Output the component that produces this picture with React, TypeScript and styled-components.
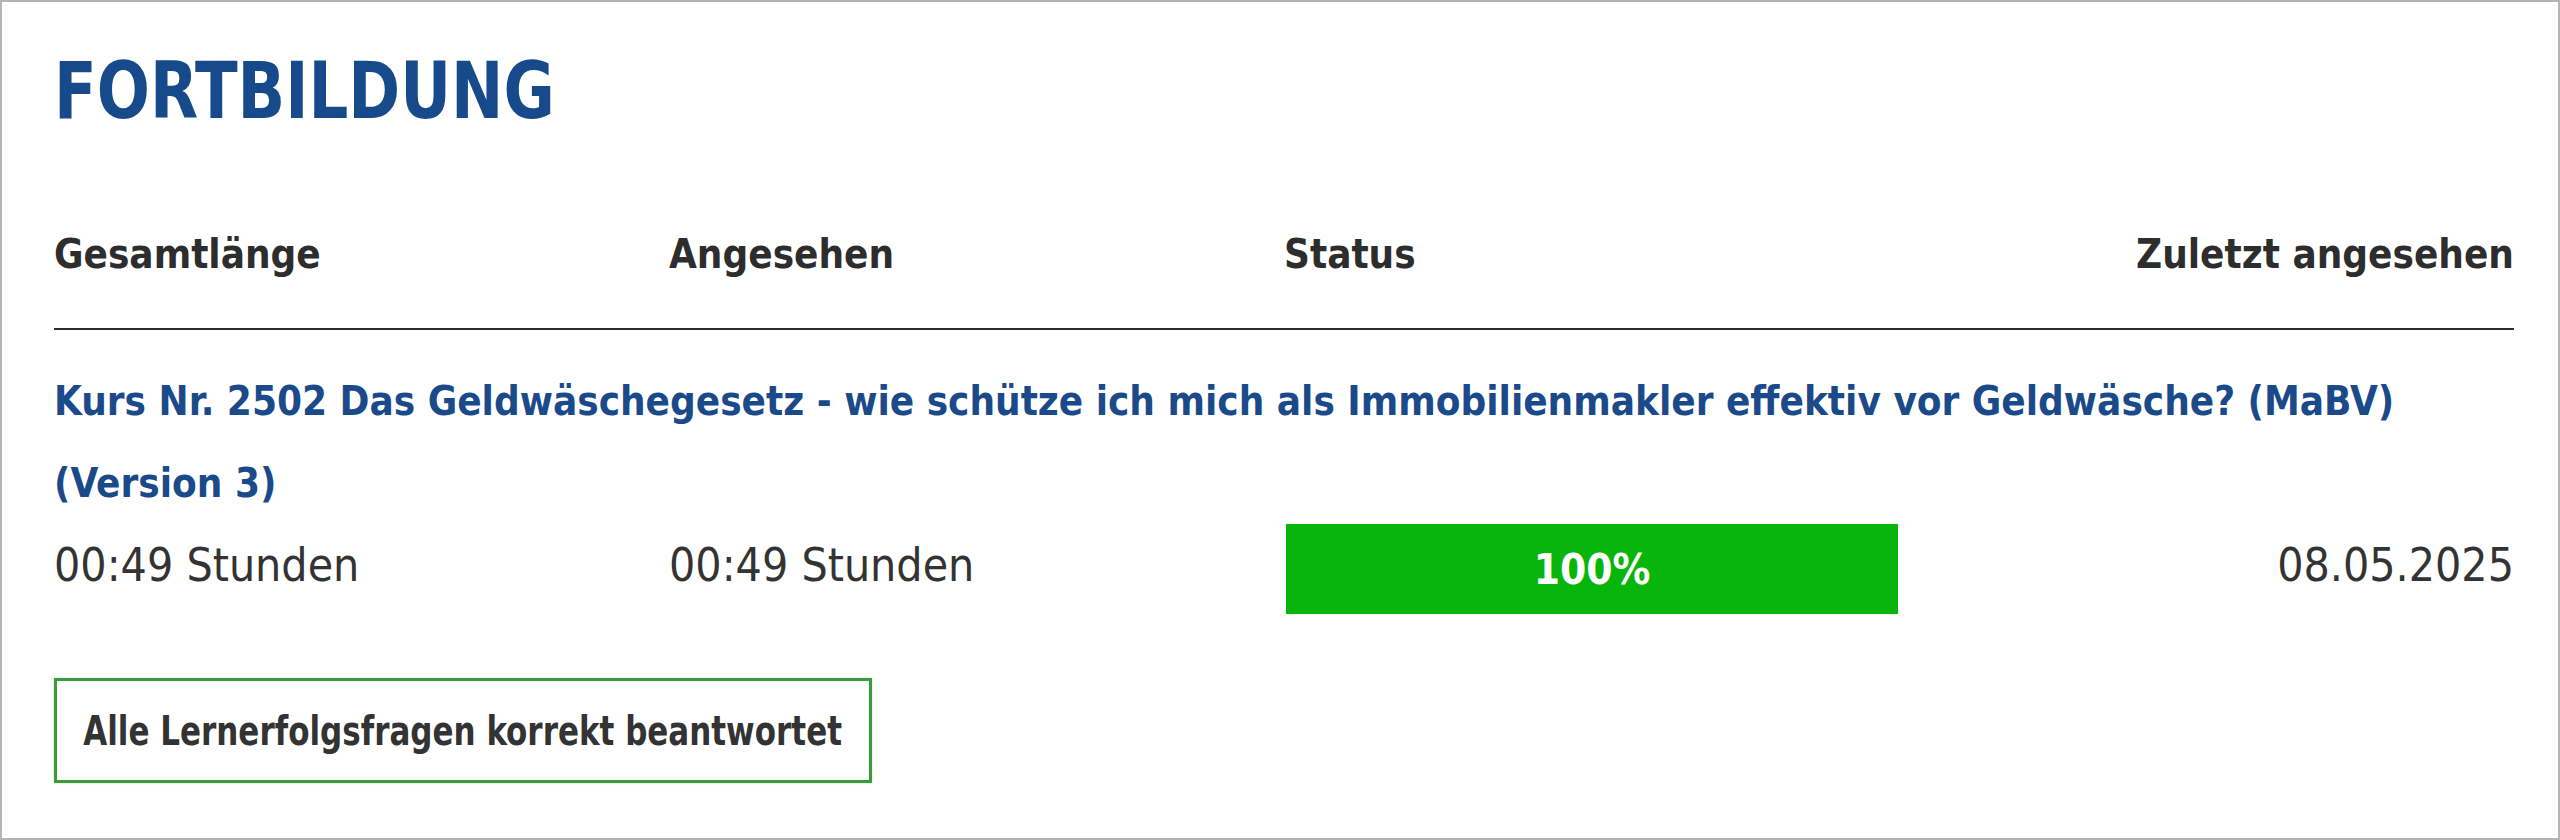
import styled, { createGlobalStyle } from "styled-components";

const GlobalStyle = createGlobalStyle`
  html, body {
    margin: 0;
    padding: 0;
    background: #ffffff;
  }
  * {
    box-sizing: border-box;
  }
`;

const Frame = styled.div`
  width: 2560px;
  height: 840px;
  border: 2px solid #b4b4b4;
  background: #ffffff;
  padding: 48px 44px 0 52px;
  display: flex;
  flex-direction: column;
  align-items: flex-start;
  font-family: "DejaVu Sans Condensed", "DejaVu Sans", sans-serif;
  font-stretch: condensed;
  color: #333333;
`;

// no narrow face installed, so squeeze the condensed one a bit more
const Title = styled.h1`
  margin: 0;
  font-size: 79px;
  line-height: 82px;
  font-weight: 700;
  color: #174a8b;
  white-space: nowrap;
  transform: scaleX(0.88);
  transform-origin: left center;
`;

const Grid = styled.div`
  width: 100%;
  display: grid;
  grid-template-columns: repeat(4, 1fr);
`;

const HeaderRow = styled(Grid)`
  margin-top: 102px;
  padding-bottom: 54px;
  border-bottom: 2px solid #2e2e2e;
`;

const HeadCell = styled.div<{ $right?: boolean }>`
  font-size: 40px;
  line-height: 40px;
  font-weight: 700;
  color: #2d2d2d;
  text-align: ${(p) => (p.$right ? "right" : "left")};
`;

const CourseTitle = styled.div`
  margin-top: 30px;
  font-size: 40px;
  line-height: 82px;
  font-weight: 700;
  color: #1b4a8a;
`;

const DataRow = styled(Grid)`
  align-items: start;
`;

const DataCell = styled.div<{ $right?: boolean }>`
  font-size: 46px;
  line-height: 82px;
  color: #333333;
  text-align: ${(p) => (p.$right ? "right" : "left")};
`;

const Progress = styled.div`
  width: calc(100% - 3px);
  height: 90px;
  margin-left: 2px;
  background: #07b50b;
  display: flex;
  align-items: center;
  justify-content: center;
  color: #ffffff;
  font-size: 42px;
  font-weight: 700;
`;

const Badge = styled.div`
  margin-top: 64px;
  width: 818px;
  height: 105px;
  border: 3px solid #3b9b3b;
  box-shadow: 0 0 2px #b9efb9;
  display: flex;
  align-items: center;
  justify-content: center;
  overflow: hidden;
`;

const BadgeText = styled.span`
  flex: none;
  white-space: nowrap;
  font-size: 41px;
  font-weight: 700;
  color: #333333;
  transform: scaleX(0.84);
`;

export default function App() {
  const pct = 100;
  return (
    <>
      <GlobalStyle />
      <Frame>
        <Title>FORTBILDUNG</Title>
        <HeaderRow>
          <HeadCell>Gesamtlänge</HeadCell>
          <HeadCell>Angesehen</HeadCell>
          <HeadCell>Status</HeadCell>
          <HeadCell $right>Zuletzt angesehen</HeadCell>
        </HeaderRow>
        <CourseTitle>
          Kurs Nr. 2502 Das Geldwäschegesetz - wie schütze ich mich als Immobilienmakler effektiv vor
          Geldwäsche? (MaBV) (Version 3)
        </CourseTitle>
        <DataRow>
          <DataCell>00:49 Stunden</DataCell>
          <DataCell>00:49 Stunden</DataCell>
          <div>
            <Progress>{pct}%</Progress>
          </div>
          <DataCell $right>08.05.2025</DataCell>
        </DataRow>
        <Badge>
          <BadgeText>Alle Lernerfolgsfragen korrekt beantwortet</BadgeText>
        </Badge>
      </Frame>
    </>
  );
}
